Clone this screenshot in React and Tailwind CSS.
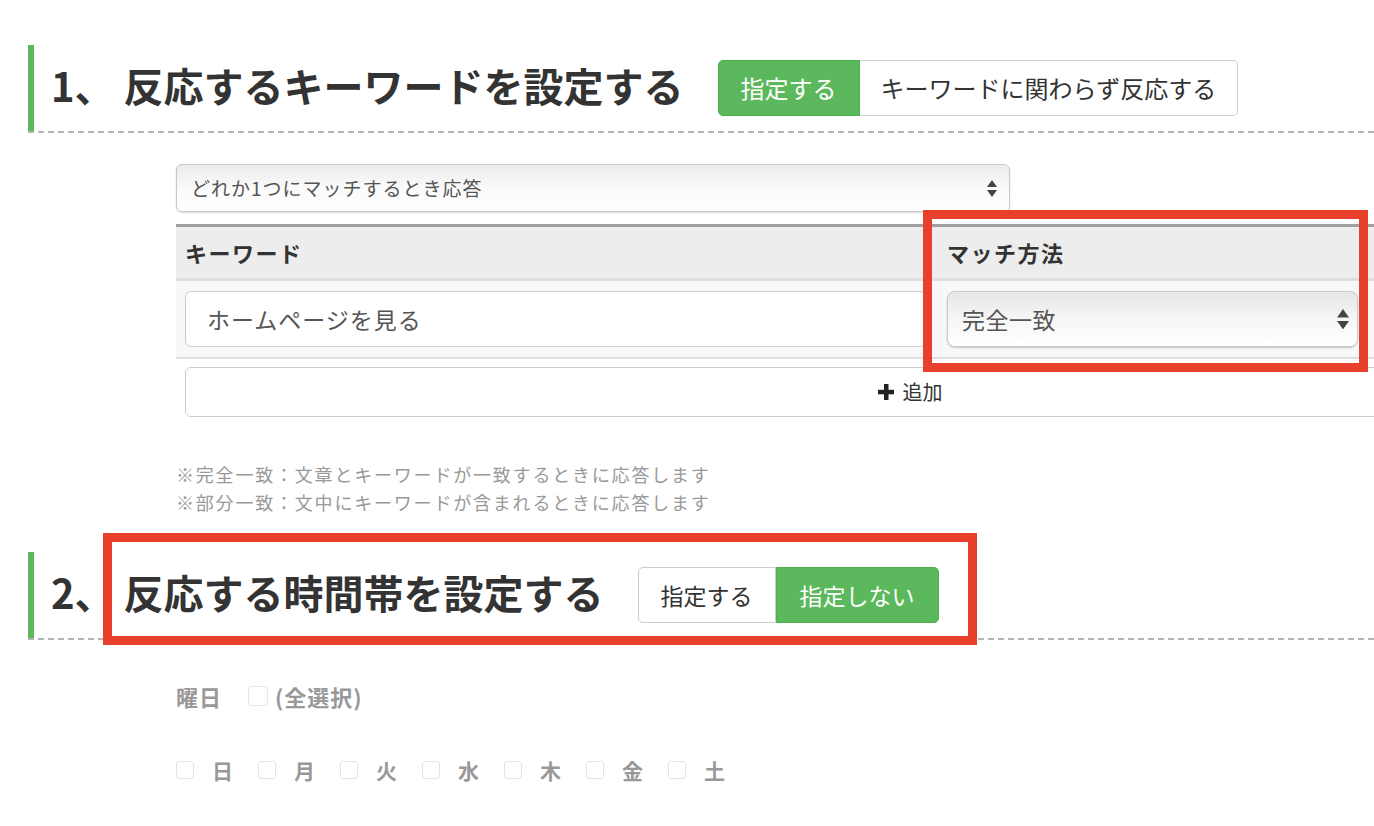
import React from 'react';

const font = "font-['Noto_Sans_CJK_JP','Noto_Sans',sans-serif]";

function Arrows({ size = 5 }) {
  return (
    <svg width={size * 2} height={size * 3.4} viewBox="0 0 10 17" className="shrink-0">
      <path d="M5 0 L10 7 L0 7 Z" fill="#444" />
      <path d="M0 10 L10 10 L5 17 Z" fill="#444" />
    </svg>
  );
}

function Box({ label }) {
  return (
    <div className="flex items-center w-[82px]">
      <span className="w-[18px] h-[18px] border border-[#e4e4e4] rounded-[3px] bg-white" />
      <span className="ml-[18px] text-[21px] font-bold text-[#999] leading-none">{label}</span>
    </div>
  );
}

function SectionHeader({ num, title, children }) {
  return (
    <div className="border-b-2 border-dashed border-[#b5b5b5]">
      <div className="flex items-center h-[86px] border-l-[6px] border-[#5cb85c] pl-[17px]">
        <h2 className="text-[40px] font-bold text-[#333] leading-none whitespace-nowrap pb-[7px]">
          <span className="mr-[9px]">{num}</span>
          {title}
        </h2>
        <div className="ml-[34px] flex">{children}</div>
      </div>
    </div>
  );
}

export default function App() {
  const days = ['日', '月', '火', '水', '木', '金', '土'];

  return (
    <div className={`relative w-[1374px] h-[826px] overflow-hidden bg-white ${font}`}>
      <div className="pt-[45px] pl-[28px]">
        {/* 1. キーワード */}
        <SectionHeader num="1、" title="反応するキーワードを設定する">
          <button className="h-[56px] px-[22px] text-[24px] text-white bg-[#5cb85c] border border-[#4cae4c] rounded-l-[5px]">指定する</button>
          <button className="h-[56px] px-[21px] text-[24px] text-[#333] bg-white border border-l-0 border-[#ccc] rounded-r-[5px]">キーワードに関わらず反応する</button>
        </SectionHeader>

        <div className="ml-[148px]">
          <div className="mt-[31px] w-[834px] h-[48px] rounded-[6px] border border-[#c8c8c8] bg-gradient-to-b from-[#ececec] via-[#fafafa] to-white shadow-[0_1px_2px_rgba(0,0,0,0.15)] flex items-center justify-between pl-[14px] pr-[12px]">
            <span className="text-[19px] text-[#555] tracking-[1px]">どれか1つにマッチするとき応答</span>
            <Arrows size={5} />
          </div>

          <div className="mt-[12px] w-[1468px] border-t-[3px] border-[#a0a0a0]">
            <div className="flex items-center h-[54px] bg-[#ededed] border-b-[3px] border-[#dedede]">
              <div className="w-[762px] pl-[9px] text-[22px] font-bold text-[#333] tracking-[1.5px]">キーワード</div>
              <div className="w-[429px] pl-[9px] text-[22px] font-bold text-[#333] tracking-[1.5px]">マッチ方法</div>
              <div className="flex-1" />
            </div>
            <div className="flex items-center bg-[#f8f8f8] py-[10px] border-b-[2px] border-[#dedede]">
              <div className="w-[762px] pl-[9px] pr-[12px]">
                <div className="h-[56px] bg-white border border-[#ccc] rounded-[6px] flex items-center pl-[21px] text-[23px] text-[#555] tracking-[1px]">ホームページを見る</div>
              </div>
              <div className="w-[429px] px-[9px]">
                <div className="h-[56px] rounded-[8px] border border-[#c8c8c8] bg-gradient-to-b from-[#e6e6e6] via-[#f6f6f6] to-white shadow-[0_1px_2px_rgba(0,0,0,0.2)] flex items-center justify-between pl-[14px] pr-[8px]">
                  <span className="text-[23px] text-[#555] tracking-[0.5px]">完全一致</span>
                  <Arrows size={6} />
                </div>
              </div>
              <div className="flex-1" />
            </div>
            <div className="pl-[9px] pt-[8px]">
              <button className="w-[1450px] h-[50px] bg-white border border-[#ccc] rounded-[6px] flex items-center justify-center gap-[9px] text-[20px] text-[#333]">
                <svg width="16" height="16" viewBox="0 0 16 16">
                  <rect x="6" y="0" width="4.5" height="16" fill="#222" />
                  <rect x="0" y="5.8" width="16" height="4.5" fill="#222" />
                </svg>
                追加
              </button>
            </div>
          </div>

          <div className="mt-[43px] text-[18px] leading-[28px] text-[#999] tracking-[1.8px]">
            <p>※完全一致：文章とキーワードが一致するときに応答します</p>
            <p>※部分一致：文中にキーワードが含まれるときに応答します</p>
          </div>
        </div>

        {/* 2. 時間帯 */}
        <div className="mt-[36px]">
          <SectionHeader num="2、" title="反応する時間帯を設定する">
            <button className="h-[56px] px-[22px] text-[23px] text-[#333] bg-white border border-[#ccc] rounded-l-[5px]">指定する</button>
            <button className="h-[56px] px-[23px] text-[23px] text-white bg-[#5cb85c] border border-[#4cae4c] rounded-r-[5px]">指定しない</button>
          </SectionHeader>
        </div>

        <div className="ml-[148px]">
          <div className="mt-[41px] h-[30px] flex items-center">
            <span className="text-[22px] font-bold text-[#999] tracking-[1px]">曜日</span>
            <span className="ml-[26px] w-[20px] h-[20px] border border-[#e4e4e4] rounded-[4px]" />
            <span className="ml-[7px] text-[22px] font-bold text-[#999] tracking-[1px]">(全選択)</span>
          </div>
          <div className="mt-[44px] h-[30px] flex items-center">
            {days.map((d) => (
              <Box key={d} label={d} />
            ))}
          </div>
        </div>
      </div>

      {/* red highlight frames */}
      <div className="absolute left-[923px] top-[210px] w-[445px] h-[162px] border-[9px] border-[#e8402b]" />
      <div className="absolute left-[103px] top-[533px] w-[874px] h-[112px] border-[9px] border-[#e8402b]" />
    </div>
  );
}
